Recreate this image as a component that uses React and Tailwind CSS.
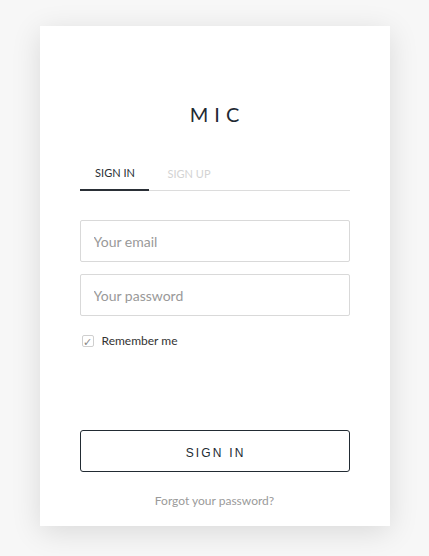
import { useState } from 'react';

const App = () => {
  const [remember, setRemember] = useState(true);

  return (
    <div className="min-h-[556px] bg-[#f7f7f7] pt-[26px] font-['Lato',sans-serif]">
      <div className="mx-auto w-[350px] h-[500px] bg-white px-10 shadow-[0_6px_28px_rgba(0,0,0,0.12)]">
        {/* Logo */}
        <h1 className="pt-[76px] text-center text-[20px] leading-[24px] tracking-[0.3em] pl-[0.3em] text-[#1f2a33]">
          MIC
        </h1>

        {/* Tabs */}
        <div className="mt-[40px] flex border-b border-[#dcdcdc]">
          <button className="w-[69px] -mb-px border-b-2 border-[#2a2f36] pb-[9px] pl-[2px] text-[11px] leading-[14px] text-[#2a2f36]">
            SIGN IN
          </button>
          <button className="ml-[3px] px-4 pb-[9px] text-[11px] leading-[14px] text-[#d3d3d3]">
            SIGN UP
          </button>
        </div>

        {/* Form */}
        <form className="mt-[29px] flex flex-col">
          <input
            type="email"
            placeholder="Your email"
            className="h-[42px] rounded-[2px] border border-[#d9d9d9] px-[13px] text-[14px] text-[#333] placeholder:text-[#999] focus:outline-none"
          />
          <input
            type="password"
            placeholder="Your password"
            className="mt-[12px] h-[42px] rounded-[2px] border border-[#d9d9d9] px-[13px] text-[14px] text-[#333] placeholder:text-[#999] focus:outline-none"
          />
          <label className="mt-[18px] flex items-center text-[12px] leading-[14px] text-[#333]">
            <span
              onClick={() => setRemember(!remember)}
              className="ml-[2px] flex h-[12px] w-[12px] items-center justify-center rounded-[2px] border border-[#cfcfcf] text-[11px] leading-none text-[#888]"
            >
              {remember ? '✓' : ''}
            </span>
            <span className="ml-[8px]">Remember me</span>
          </label>

          <button
            type="button"
            className="mt-[82px] h-[42px] rounded-[3px] border border-[#222b33] pt-[3px] font-['Liberation_Sans',sans-serif] text-[12px] tracking-[0.18em] pl-[0.18em] text-[#222b33]"
          >
            SIGN IN
          </button>
        </form>

        <p className="mt-[20px] text-center text-[12px] text-[#9a9a9a]">Forgot your password?</p>
      </div>
    </div>
  );
};

export default App;
